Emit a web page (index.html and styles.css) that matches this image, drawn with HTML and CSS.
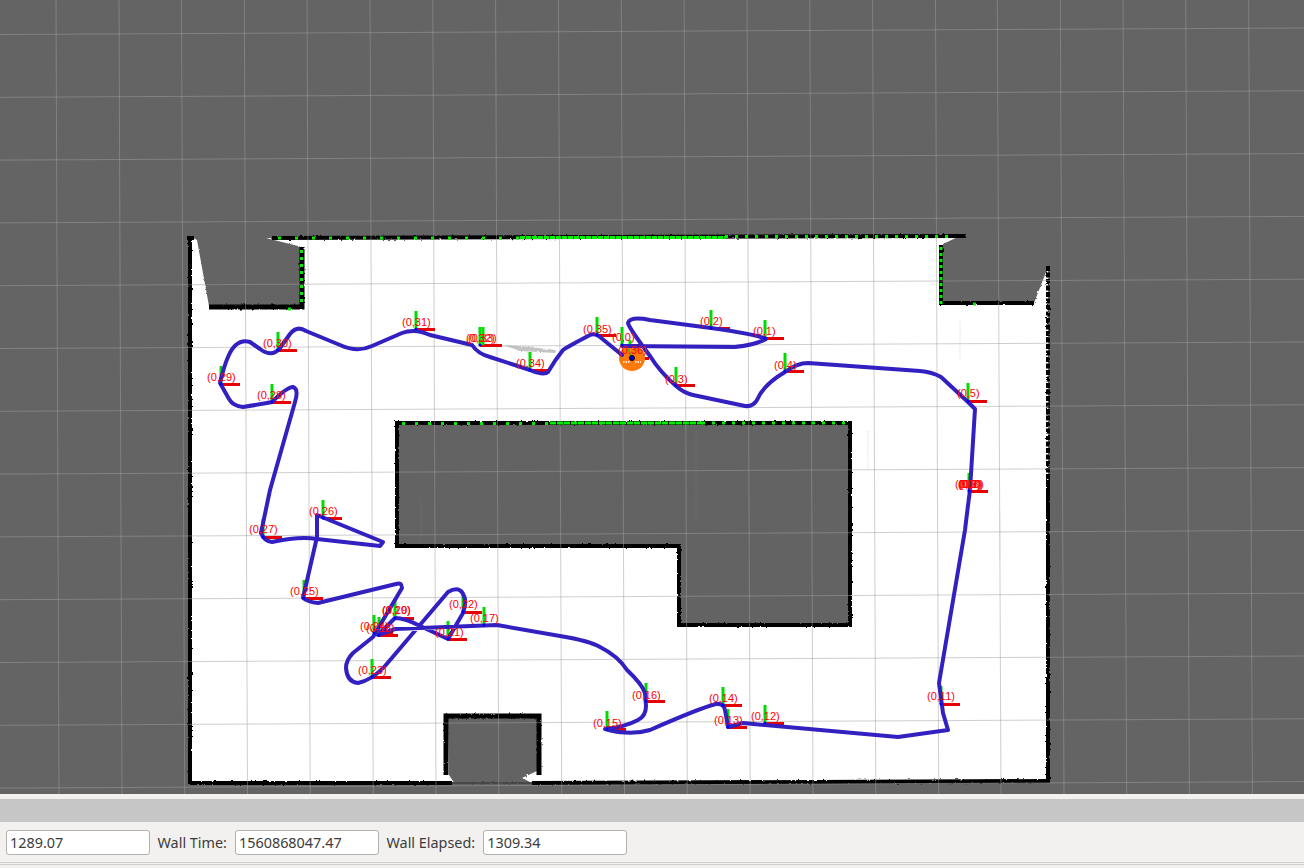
FILE: index.html
```html
<!DOCTYPE html>
<html lang="en">
<head>
    <meta charset="UTF-8">
    <title>RViz</title>
    <link rel="stylesheet" href="styles.css">
</head>
<body>
    <svg class="viewport" width="1304" height="794" viewBox="0 0 1304 794">
        <defs>
            <filter id="rough" x="-5%" y="-5%" width="110%" height="110%">
                <feTurbulence type="fractalNoise" baseFrequency="0.35" numOctaves="2" seed="4"/>
                <feDisplacementMap in="SourceGraphic" scale="2.5"/>
                <feGaussianBlur stdDeviation="0.55"/>
            </filter>
            <g id="axes">
                <rect class="axis-x" x="0" y="-1" width="19" height="3"/>
                <rect class="axis-y" x="-1.5" y="-18" width="3" height="18"/>
            </g>
        </defs>

        <!-- occupancy map -->
        <g filter="url(#rough)">
            <path class="floor" d="M190 238 L197 240 L209 306 H302 V247 L266 238 L960 236 L943 244 V303 H1034 L1048 267 V782 H190 Z"/>
            <path class="floor-void" d="M448 718 H537 V771 L522 778 L534 784 H455 L449 775 Z"/>
            <path class="wall" d="M190 237 V784 M187 238 H194"/>
            <path class="wall" d="M272 238 L966 236"/>
            <path class="wall" d="M190 783 H452 M532 783 L1050 781"/>
            <path class="wall wall-faint" d="M452 783 H532"/>
            <path class="wall wall-dotted" d="M1048 266 V480"/>
            <path class="wall" d="M1048 480 V782"/>
            <path class="wall wall-thick" d="M209 307 H302 V247"/>
            <path class="wall" d="M941 245 V303 H1034"/>
            <path class="wall wall-thick" d="M446 775 V716 H539 V775"/>
            <path class="block wall" d="M397 423 H850 V625 H679 V546 H397 Z"/>
            <path class="smear" d="M503 345 L530 347 L556 350 L555 353 L520 351 Z"/>
            <path class="scratch" d="M421 500 V540 M696 430 V520 M868 430 V470 M1000 510 V560 M960 320 V360"/>
        </g>

        <!-- grid -->
        <path class="grid" d="M56 0 L59 794 M119 0 L122 794 M181.500 0 L184.700 794 M244.300 0 L247.500 794 M307 0 L310.200 794 M370 0 L373.200 794 M432.800 0 L436 794 M495.600 0 L498.800 794 M558.500 0 L561.700 794 M621.300 0 L624.500 794 M684.100 0 L687.300 794 M747 0 L750.200 794 M809.800 0 L813 794 M872.600 0 L875.800 794 M935.500 0 L938.700 794 M997.300 0 L1001 794 M1060.300 0 L1064 794 M1123 0 L1126.700 794 M1185.700 0 L1189.400 794 M1248.700 0 L1252.400 794"/>
        <path class="grid" d="M0 34.500 L1304 28 M0 97.300 L1304 90.800 M0 160.100 L1304 153.600 M0 222.900 L1304 216.400 M0 285.700 L1304 279.200 M0 348.500 L1304 342 M0 411.300 L1304 404.800 M0 474.100 L1304 467.600 M0 536.900 L1304 530.400 M0 599.700 L1304 593.200 M0 662.500 L1304 656 M0 725.300 L1304 718.800 M0 788.100 L1304 781.600"/>

        <!-- laser scan hits -->
        <path class="scan" stroke-dasharray="3 14" d="M278 238 H520"/>
        <path class="scan" stroke-dasharray="5 1" d="M520 237.500 H725"/>
        <path class="scan" stroke-dasharray="3 7" d="M725 236.500 H952"/>
        <path class="scan" stroke-dasharray="3 4" d="M301.500 250 V306"/>
        <path class="scan" stroke-dasharray="3 3" d="M941 247 V305"/>
        <path class="scan" stroke-dasharray="3 10" d="M402 423.500 H550"/>
        <path class="scan" stroke-dasharray="6 1" d="M550 423 H702"/>
        <path class="scan" stroke-dasharray="3 7" d="M702 423 H845"/>
        <path class="scan" d="M288 309 H291 M973 304 H976"/>

        <!-- poses -->
        <use href="#axes" x="622" y="345"/>
        <use href="#axes" x="765" y="338"/>
        <use href="#axes" x="711" y="328"/>
        <use href="#axes" x="676" y="385"/>
        <use href="#axes" x="785" y="371"/>
        <use href="#axes" x="968" y="401"/>
        <use href="#axes" x="969" y="491"/>
        <use href="#axes" x="941" y="704"/>
        <use href="#axes" x="765" y="723"/>
        <use href="#axes" x="728" y="727"/>
        <use href="#axes" x="723" y="705"/>
        <use href="#axes" x="607" y="729"/>
        <use href="#axes" x="646" y="701"/>
        <use href="#axes" x="484" y="625"/>
        <use href="#axes" x="379" y="635"/>
        <use href="#axes" x="374" y="633"/>
        <use href="#axes" x="395" y="618"/>
        <use href="#axes" x="448" y="639"/>
        <use href="#axes" x="463" y="612"/>
        <use href="#axes" x="372" y="677"/>
        <use href="#axes" x="304" y="598"/>
        <use href="#axes" x="323" y="518"/>
        <use href="#axes" x="263" y="537"/>
        <use href="#axes" x="272" y="402"/>
        <use href="#axes" x="221" y="384"/>
        <use href="#axes" x="278" y="350"/>
        <use href="#axes" x="416" y="329"/>
        <use href="#axes" x="480" y="345"/>
        <use href="#axes" x="483" y="345"/>
        <use href="#axes" x="530" y="370"/>
        <use href="#axes" x="597" y="335"/>

        <!-- robot -->
        <use href="#axes" x="630" y="358"/>
        <circle class="robot" cx="632" cy="358" r="13"/>
        <path class="laser" d="M623 362 H630 M635 362 H641"/>
        <path class="heading" d="M628 349 L632 358"/>

        <!-- trajectory -->
        <path class="track" d="M622 346 L735 347 Q755 345 766 339 Q760 335 711 328 L650 320 Q630 316 628 323 Q629 328 650 356 Q660 372 676 386 Q684 393 693 395 L745 406 Q753 407 757 400 Q763 385 785 372 Q797 363 808 363 L920 371 Q932 372 941 377 L968 402 L975 409 L970 490 Q968 505 965 530 L939 683 L943 713 L948 730 L898 737 L743 723 L728 727 L725 710 Q724 703 716 704 Q700 708 650 730 Q630 736 605 729 Q625 727 638 720 Q646 716 646 706 L645 693 Q642 684 627 670 Q618 656 600 647 Q590 641 560 636 L497 625 L395 629 L378 635 L395 618 Q405 618 420 626 L448 639 L463 613 Q467 602 464 596 Q460 585 448 592 L385 666 Q372 680 358 683 Q347 682 346 668 Q346 660 353 653 L373 637 L402 588 Q402 582 396 584 L318 603 Q308 602 303 598 L317 537 L317 515 L383 542 L380 546 L317 539 Q300 536 272 542 Q264 541 261 533 L270 490 L295 402 Q299 389 293 387 Q287 387 272 402 Q262 404 243 407 Q233 406 229 399 L220 383 Q224 366 228 357 Q236 338 250 342 L260 349 Q272 358 280 348 L290 334 Q297 325 306 331 L340 345 Q357 353 372 346 L402 333 Q415 328 430 335 L472 345 Q478 354 490 357 L530 370 Q544 376 548 372 Q555 360 563 350 Q567 347 590 335 Q595 333 600 337 L622 355"/>
        <path class="origins" d="M622 345h0 M765 338h0 M711 328h0 M676 385h0 M785 371h0 M968 401h0 M969 491h0 M941 704h0 M765 723h0 M728 727h0 M723 705h0 M607 729h0 M646 701h0 M484 625h0 M379 635h0 M374 633h0 M395 618h0 M448 639h0 M463 612h0 M372 677h0 M304 598h0 M323 518h0 M263 537h0 M272 402h0 M221 384h0 M278 350h0 M416 329h0 M480 345h0 M530 370h0 M597 335h0"/>
        <circle class="robot-center" cx="632" cy="358" r="2.500"/>

        <!-- labels -->
        <g class="labels">
            <text x="612" y="341">(0,0)</text>
            <text x="753" y="335">(0,1)</text>
            <text x="700" y="325">(0,2)</text>
            <text x="665" y="383">(0,3)</text>
            <text x="774" y="369">(0,4)</text>
            <text x="957" y="397">(0,5)</text>
            <text x="958" y="488">(0,6)</text>
            <text x="959" y="488">(0,7)</text>
            <text x="960" y="488">(0,8)</text>
            <text x="958" y="488">(0,9)</text>
            <text x="955" y="488">(0,10)</text>
            <text x="927" y="700">(0,11)</text>
            <text x="751" y="720">(0,12)</text>
            <text x="714" y="724">(0,13)</text>
            <text x="709" y="702">(0,14)</text>
            <text x="593" y="727">(0,15)</text>
            <text x="632" y="699">(0,16)</text>
            <text x="470" y="622">(0,17)</text>
            <text x="366" y="632">(0,18)</text>
            <text x="382" y="614">(0,19)</text>
            <text x="382" y="614">(0,20)</text>
            <text x="435" y="636">(0,21)</text>
            <text x="449" y="608">(0,22)</text>
            <text x="358" y="674">(0,23)</text>
            <text x="360" y="630">(0,24)</text>
            <text x="290" y="595">(0,25)</text>
            <text x="309" y="515">(0,26)</text>
            <text x="249" y="533">(0,27)</text>
            <text x="257" y="399">(0,28)</text>
            <text x="207" y="381">(0,29)</text>
            <text x="263" y="347">(0,30)</text>
            <text x="402" y="326">(0,31)</text>
            <text x="466" y="342">(0,32)</text>
            <text x="468" y="342">(0,33)</text>
            <text x="516" y="367">(0,34)</text>
            <text x="583" y="333">(0,35)</text>
            <text x="618" y="354">(0,36)</text>
        </g>
    </svg>

    <div class="gap"></div>
    <div class="seek-bar"></div>
    <div class="time-panel">
        <input class="time-field" type="text" value="1289.07" readonly>
        <label class="time-label">Wall Time:</label>
        <input class="time-field" type="text" value="1560868047.47" readonly>
        <label class="time-label">Wall Elapsed:</label>
        <input class="time-field" type="text" value="1309.34" readonly>
    </div>
    <div class="status-line"></div>
</body>
</html>
```

FILE: styles.css
```css
html, body {
    margin: 0;
    height: 100%;
    overflow: hidden;
    background-color: #f2f1f0;
    font-family: "Noto Sans", sans-serif;
}
.viewport {
    display: block;
    background-color: #646464;
}
.floor {
    fill: #fff;
}
.floor-void {
    fill: #646464;
}
.wall {
    fill: none;
    stroke: #000;
    stroke-width: 4;
}
.wall-thick {
    stroke-width: 5;
}
.wall-faint {
    stroke: #3c3c3c;
    stroke-width: 1.5;
}
.wall-dotted {
    stroke-width: 4;
    stroke-dasharray: 5 1.500;
}
.block {
    fill: #646464;
}
.smear {
    fill: #c4c4c4;
}
.scratch {
    fill: none;
    stroke: #8a8a8a;
    stroke-opacity: 0.15;
}
.grid {
    fill: none;
    stroke: #a0a0a0;
    stroke-opacity: 0.5;
    stroke-width: 1;
}
.scan {
    fill: none;
    stroke: #00f000;
    stroke-width: 3;
}
.axis-x {
    fill: #e60000;
}
.axis-y {
    fill: #00dc00;
}
.robot {
    fill: #ff7a0c;
}
.laser {
    fill: none;
    stroke: #fff;
    stroke-width: 1.5;
    stroke-dasharray: 1.500 1;
}
.heading {
    fill: none;
    stroke: #00c800;
}
.track {
    fill: none;
    stroke: #3320c0;
    stroke-width: 4;
    stroke-linejoin: round;
    stroke-linecap: round;
}
.origins {
    fill: none;
    stroke: #0000ff;
    stroke-width: 3;
    stroke-linecap: round;
}
.robot-center {
    fill: #0000e0;
    stroke: #000;
    stroke-width: 1;
}
.labels text {
    font-family: "Liberation Sans", Arial, sans-serif;
    font-size: 11px;
    fill: #ff0000;
}
.gap {
    height: 5px;
}
.seek-bar {
    height: 23px;
    background-color: #c6c6c6;
}
.time-panel {
    display: flex;
    align-items: center;
    height: 40px;
    padding-left: 6px;
    box-sizing: border-box;
}
.time-field {
    width: 144px;
    height: 25px;
    box-sizing: border-box;
    padding: 0 3px;
    border: 1px solid #b3b1ad;
    border-radius: 3px;
    background-color: #fff;
    color: #3c3c3c;
    font-family: "Noto Sans", sans-serif;
    font-size: 14.4px;
}
.time-label {
    margin: 0 8px 0 7.500px;
    color: #3c3c3c;
    font-size: 14.4px;
}
.status-line {
    height: 1px;
    border-top: 1px solid #d0cfcc;
    border-bottom: 1px solid #d0cfcc;
}
```
